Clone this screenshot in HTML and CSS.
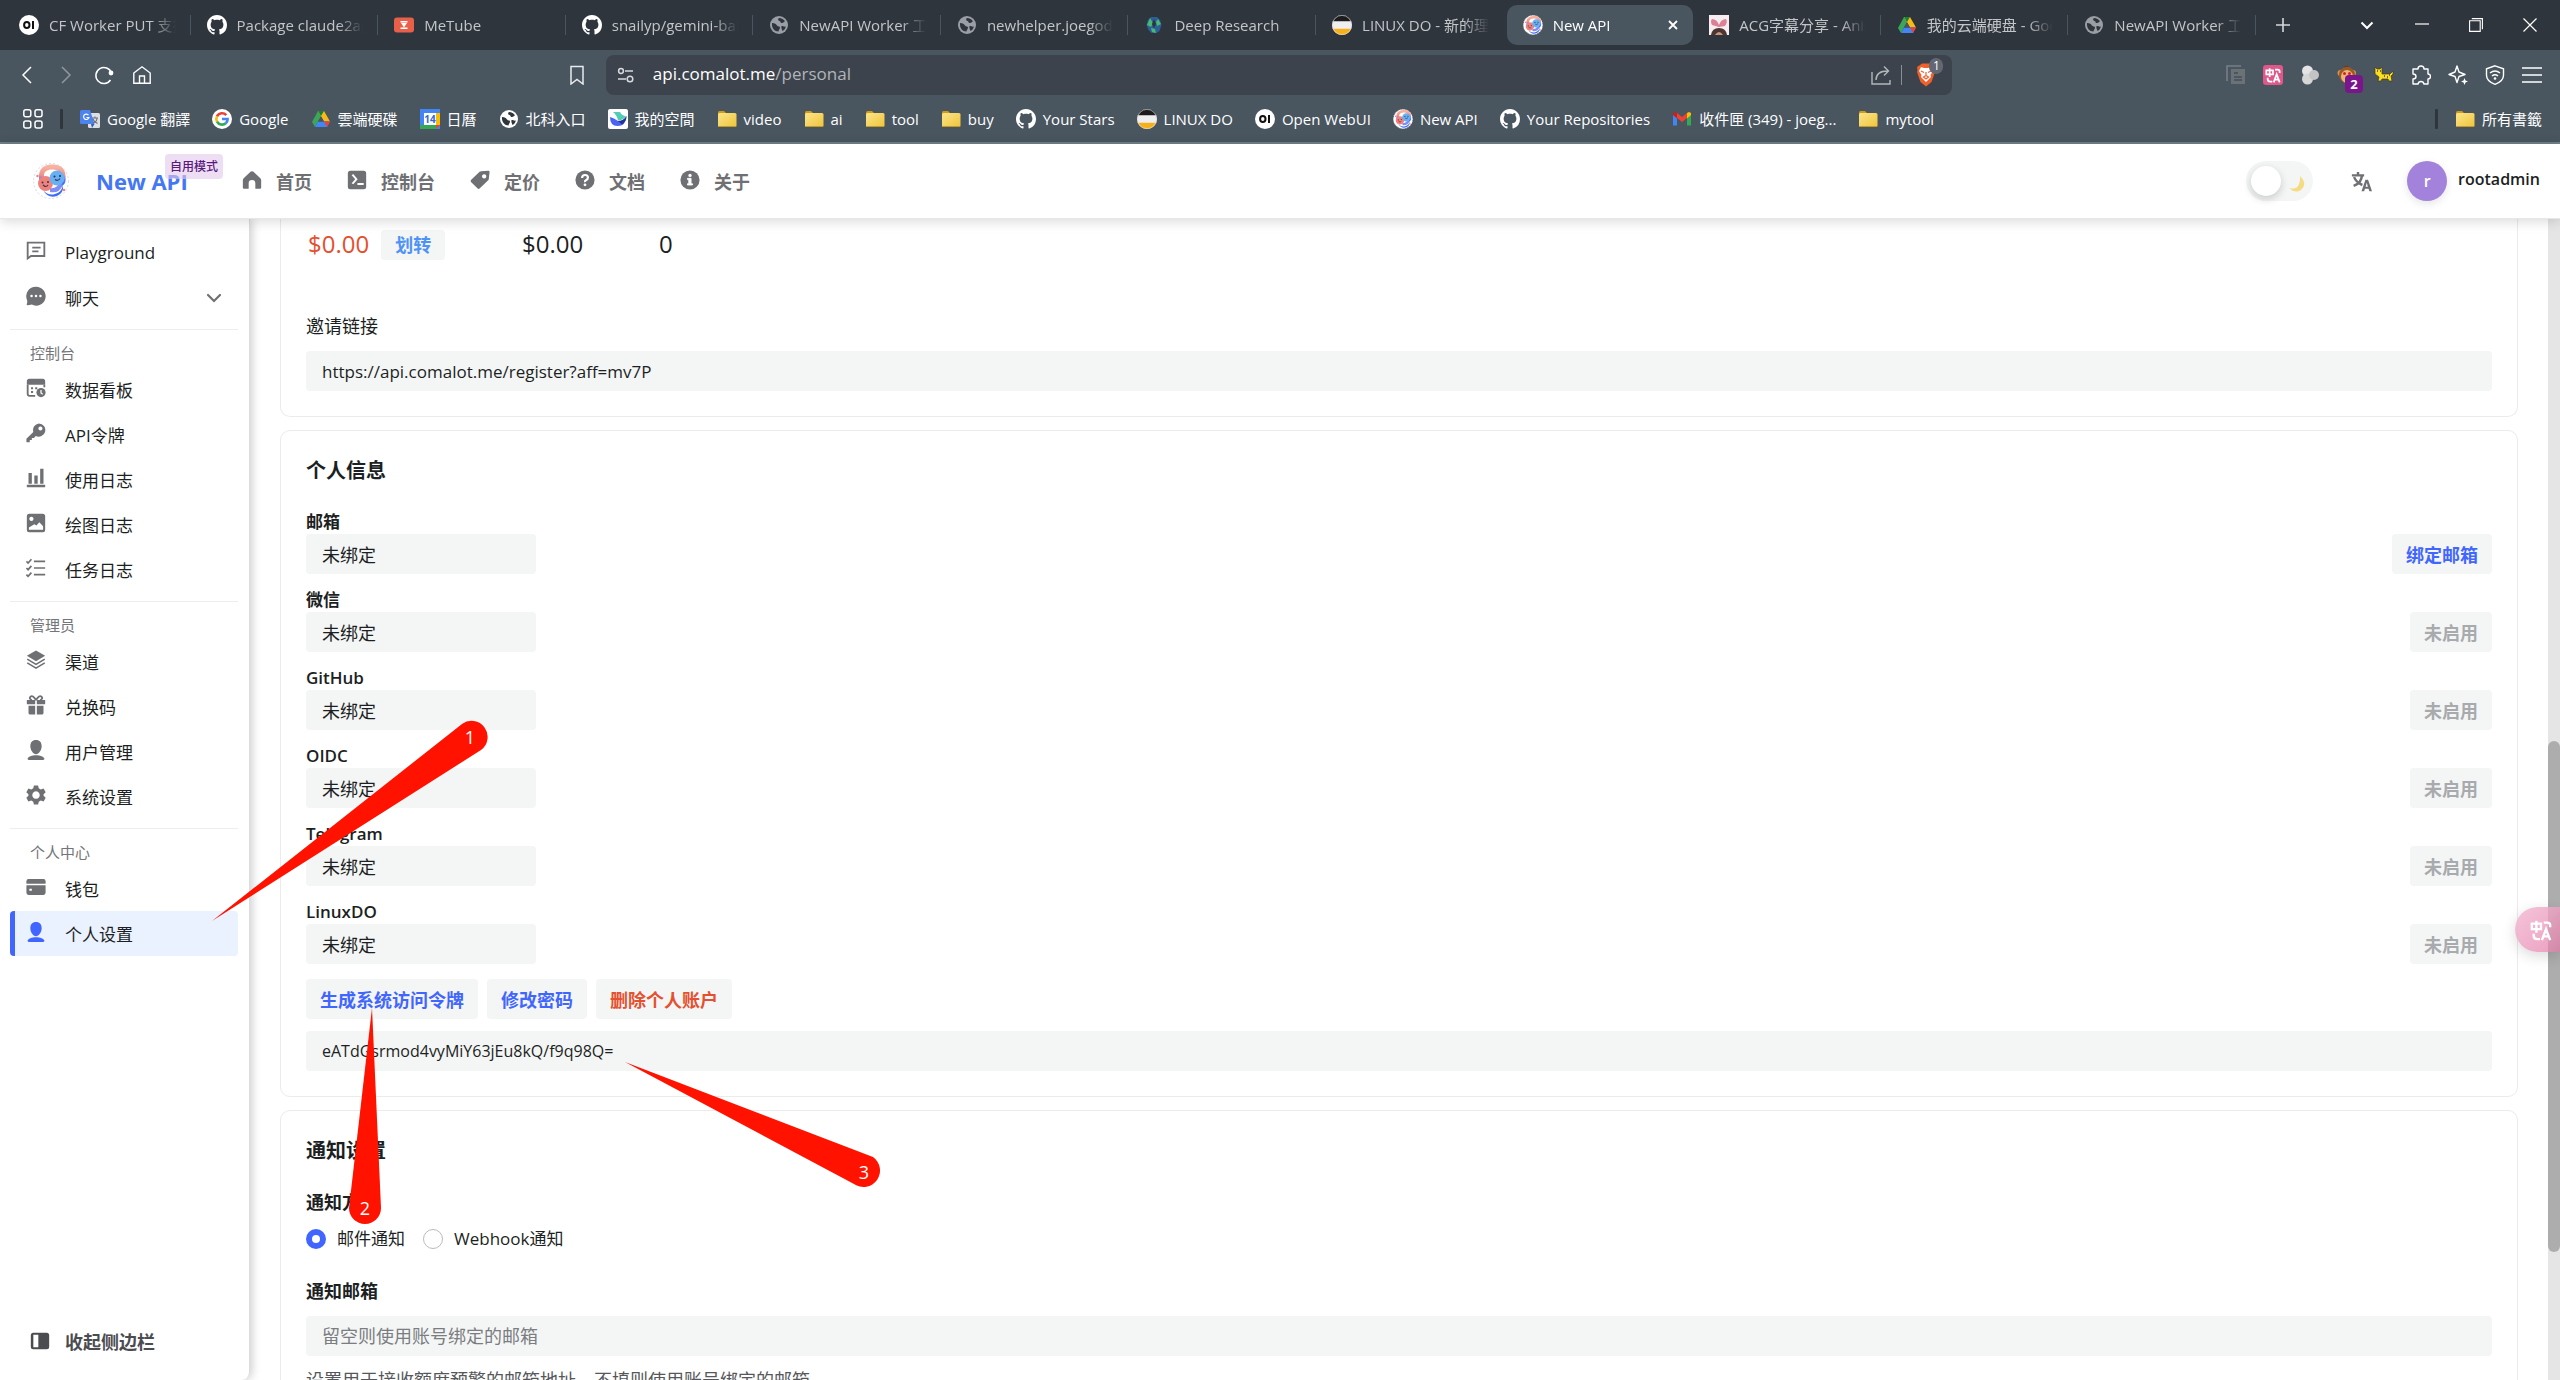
FILE: index.html
```html
<!DOCTYPE html>
<html lang="zh-CN">
<head>
<meta charset="utf-8">
<title>New API</title>
<link rel="stylesheet" href="styles.css">
</head>
<body>
<svg class="sprite" aria-hidden="true">
  <defs>
    <linearGradient id="ring" x1="0" y1="0" x2="0" y2="1"><stop offset="0" stop-color="#f7b3a0"/><stop offset=".5" stop-color="#ee8f8c"/><stop offset=".7" stop-color="#6a7df0"/><stop offset="1" stop-color="#3d6df5"/></linearGradient>
    <linearGradient id="fold" x1="0" y1="0" x2="1" y2="1"><stop offset="0" stop-color="#fbe58a"/><stop offset="1" stop-color="#efc43a"/></linearGradient>
  </defs>
  <symbol id="github" viewBox="0 0 16 16"><path fill="#fff" d="M8 0C3.58 0 0 3.58 0 8c0 3.54 2.29 6.53 5.47 7.59.4.07.55-.17.55-.38 0-.19-.01-.82-.01-1.49-2.01.37-2.53-.49-2.69-.94-.09-.23-.48-.94-.82-1.13-.28-.15-.68-.52-.01-.53.63-.01 1.08.58 1.23.82.72 1.21 1.87.87 2.33.66.07-.52.28-.87.51-1.07-1.78-.2-3.64-.89-3.64-3.95 0-.87.31-1.59.82-2.15-.08-.2-.36-1.02.08-2.12 0 0 .67-.21 2.2.82.64-.18 1.32-.27 2-.27s1.36.09 2 .27c1.53-1.04 2.2-.82 2.2-.82.44 1.1.16 1.92.08 2.12.51.56.82 1.27.82 2.15 0 3.07-1.87 3.75-3.65 3.95.29.25.54.73.54 1.48 0 1.07-.01 1.93-.01 2.2 0 .21.15.46.55.38A8.01 8.01 0 0 0 16 8c0-4.42-3.58-8-8-8z"/></symbol>
  <symbol id="openwebui" viewBox="0 0 20 20"><circle cx="10" cy="10" r="10" fill="#fff"/><ellipse cx="7.8" cy="10" rx="2.7" ry="3" fill="none" stroke="#111" stroke-width="2"/><path d="M14 6v8" stroke="#111" stroke-width="2"/></symbol>
  <symbol id="metube" viewBox="0 0 20 20"><rect y="2.5" width="20" height="15" rx="3" fill="#e9604a"/><path d="M6.500 6h7v1.600H6.500zM6.500 12.500h7V14H6.500zM7 8h6l-3 4.500z" fill="#fff"/></symbol>
  <symbol id="globe" viewBox="0 0 20 20"><circle cx="10" cy="10" r="9" fill="currentColor"/><path class="globe-land" d="M3 8c3 0 4 1 5 2.500s3 .5 3 2-1 1.500-1.500 4c-4 0-7-3.500-6.500-8.500zM10 3c-1.500 1-1 2.500.5 3s.5 2 2.500 2 1.500-1.500 3-1.500C15 4.500 12.500 3 10 3zM12.500 11c2 0 2.500 1 4.300.500-.4 2-1.500 3.500-3.300 4.500-.5-2-1.500-2.500-1-5z"/></symbol>
  <symbol id="deep" viewBox="0 0 20 20"><path d="M7 2h6l3 3 1.500 5-2 6-3 2H7.500l-3-3-2-5L4 5z" fill="#2d5e96"/><path d="M6 3l3 5-2 4-4-2zM14 4l3 5-4 2-1-4zM7 13l4 1 1 4-4-1z" fill="#48b877"/><path d="M10 4l2 5-2 4-2-4z" fill="#2f353d"/></symbol>
  <symbol id="linux" viewBox="0 0 20 20"><circle cx="10" cy="10" r="10" fill="#efefef"/><path d="M.8 6.200a10 10 0 0 1 18.400 0z" fill="#1c1c1e"/><path d="M.8 13.800a10 10 0 0 0 18.400 0z" fill="#f5b01c"/><circle cx="10" cy="10" r="9.600" fill="none" stroke="#ddd" stroke-width=".6"/></symbol>
  <symbol id="newapi" viewBox="0 0 36 36">
    <circle cx="18" cy="18" r="17.500" fill="#fff" stroke="#d5dae2" stroke-dasharray="2 2"/>
    <path d="M9 18Q6 5 18 4t12 10q1 6-3 7" fill="none" stroke="url(#ring)" stroke-width="5"/>
    <path d="M10 27q5 6 12 4t8-9q1 8-6 11-9 3-14-6z" fill="#3d6df5"/>
    <path d="M17 25q7 1 9-5l4 2q-4 9-13 7z" fill="#7f8df5"/>
    <circle cx="12.500" cy="20.500" r="7.500" fill="#f0827c"/><circle cx="24" cy="15" r="7.500" fill="#68b0f4"/>
    <path d="M10 22q3 3 5 0M22 16.500q3 2 5-1" stroke="#3b3550" fill="none" stroke-width="1.200"/>
    <circle cx="9.500" cy="19.500" r="1" fill="#3b3550"/><circle cx="15" cy="19" r="1" fill="#3b3550"/><circle cx="21.500" cy="13.500" r="1" fill="#23304f"/><circle cx="27" cy="13" r="1" fill="#23304f"/>
    <circle cx="4.500" cy="13" r="1.200" fill="#f47d84"/><circle cx="31" cy="27" r="1.200" fill="#f47d84"/>
  </symbol>
  <symbol id="acg" viewBox="0 0 20 20"><path fill="#f6eef0" d="M0 0h20v20H0z"/><path d="M10 12L3 10Q1 6 3 4q5 0 7 6 2-6 7-6 2 3-1 7z" fill="#dc8195"/><path d="M2 20q1-7 8-7t8 7z" fill="#4d3532"/><path d="M6 20q4-6 8 0z" fill="#c9967c"/></symbol>
  <symbol id="drive" viewBox="0 0 20 20"><path d="M7 2h6L7 12.500 4 18 1 13z" fill="#3ba55a"/><path d="M7 2h6l6 10.500h-6z" fill="#f8bb15"/><path d="M7 2h6l-3 5z" fill="#188038"/><path d="M7 12.500h12L16 18H4z" fill="#4285f4"/><path d="M13 12.500h6L16 18z" fill="#ea4335"/><path d="M10 7.500l3 5H7z" fill="#49555f"/></symbol>
  <symbol id="gtrans" viewBox="0 0 20 20"><rect x="8" y="4" width="12" height="15" rx="1.500" fill="#dde0e3"/><path d="M1.500 1H10l4.500 14H1.500A1.500 1.500 0 0 1 0 13.500v-11A1.500 1.500 0 0 1 1.500 1z" fill="#4c83ee"/><path d="M11 15h3.500L12 19z" fill="#2c5cc5"/><path d="M8.500 6.200a2.700 2.700 0 1 0 .4 2.300H6.500" fill="none" stroke="#fff" stroke-width="1.200"/><path d="M12 9h6M15 7.500V9M13 14q4-1 4-5M13 10q1 3 4.500 4.500" fill="none" stroke="#68727c" stroke-width="1.100"/></symbol>
  <symbol id="google" viewBox="0 0 20 20"><circle cx="10" cy="10" r="10" fill="#fff"/><g fill="none" stroke-width="2.600"><path d="M14.300 6.200A5.700 5.700 0 0 0 5 7.300" stroke="#ea4335"/><path d="M5 7.300a5.700 5.700 0 0 0 0 5.400" stroke="#fbbc05"/><path d="M5 12.700a5.700 5.700 0 0 0 8.800 1.500" stroke="#34a853"/><path d="M13.800 14.200A5.500 5.500 0 0 0 15.600 10H10" stroke="#4285f4"/></g></symbol>
  <symbol id="calendar" viewBox="0 0 20 20"><path d="M0 0h20v20H0z" fill="#4285f4"/><path d="M16 4h4v12h-4z" fill="#fbbc04"/><path d="M0 16h16v4H0z" fill="#34a853"/><path d="M16 16h4l-4 4z" fill="#ea4335"/><path d="M4 4h12v12H4z" fill="#fff"/><text x="10" y="13.500" text-anchor="middle" font-size="10" font-weight="700" fill="#3367d6">14</text></symbol>
  <symbol id="space" viewBox="0 0 20 20"><rect width="20" height="20" rx="2" fill="#fff"/><path d="M2 8q4 1 8 4 6 0 8.500-5-.5 10-9 10Q2 17 2 8z" fill="#4a63f2"/><path d="M5 3h7q2 4 6 4-2 4-8 4.500Q9 6 5 3z" fill="#55cdb4"/><path d="M18.500 7q-2.500 5-8.500 5l4 3.500q4.500-3 4.500-8.500z" fill="#25338f"/></symbol>
  <symbol id="folder" viewBox="0 0 20 20"><path d="M1 3.500Q1 2 2.500 2H7l2 2h9v5H1z" fill="#d29b16"/><rect x="1" y="4" width="18.500" height="14" rx="1.500" fill="url(#fold)"/><path d="M1.500 17.500h17.500" stroke="#c79a22" stroke-width="1"/></symbol>
  <symbol id="gmail" viewBox="0 0 20 20"><path d="M1 5v11.500h4V8z" fill="#4285f4"/><path d="M15 8v8.500h4V5z" fill="#34a853"/><path d="M1 6V4l2-1 2 1v5.500z" fill="#c5221f"/><path d="M15 9.500V4l2-1 2 1v2z" fill="#fbbc04"/><path d="M5 4l5 4 5-4v5l-5 4-5-4z" fill="#ea4335"/></symbol>

  <symbol id="i-home" viewBox="0 0 24 24"><path d="M12 1.500q1 0 1.800.700l8.200 7.600q1 1 1 2.300V21q0 1.500-1.500 1.500H16V16q0-4-4-4t-4 4v6.500H2.500Q1 22.500 1 21v-8.900q0-1.300 1-2.300l8.200-7.600Q11 1.500 12 1.500z"/></symbol>
  <symbol id="i-terminal" viewBox="0 0 24 24"><path fill-rule="evenodd" d="M4 1h16q3 0 3 3v16q0 3-3 3H4q-3 0-3-3V4q0-3 3-3zm1.600 5.200L9.800 11l-4.200 4.800 1.900 1.400L12.800 11 7.500 4.800zM12.500 15.500V18H20v-2.500z"/></symbol>
  <symbol id="i-tag" viewBox="0 0 24 24"><path fill-rule="evenodd" d="M13.500 1.500L22 1q1.500 0 1.500 1.500l-1 8.500q-.2 1-1 1.700l-10 9.600q-1.200 1-2.300 0l-8-8q-1-1.300 0-2.400l10.300-9.700q.9-.700 2-.7zM17 5a2.600 2.600 0 1 0 .01 0z"/></symbol>
  <symbol id="i-help" viewBox="0 0 24 24"><circle cx="12" cy="12" r="11.500"/><path d="M8.500 9.500Q8.500 6 12 6t3.500 3q0 2-2 3T12 14.500" fill="none" stroke="#fff" stroke-width="2.600"/><circle cx="12" cy="17.800" r="1.700" fill="#fff"/></symbol>
  <symbol id="i-info" viewBox="0 0 24 24"><circle cx="12" cy="12" r="11.500"/><circle cx="12" cy="6.500" r="2" fill="#fff"/><path d="M9 10h4.300v6.500H15V18H9v-1.500h1.500v-5H9z" fill="#fff" stroke="#fff"/></symbol>
  <symbol id="i-lang" viewBox="0 0 24 24"><path d="M1 5h14M8 1v4M3 17q9-3 9.500-12M3.500 7Q6 13 13 16" fill="none" stroke="currentColor" stroke-width="2.800"/><path fill-rule="evenodd" d="M16.500 10h3L24 23h-3l-1-2.700h-4L15 23h-3zM18 13.500l-1.300 4.500h2.600z"/></symbol>
  <symbol id="i-note" viewBox="0 0 24 24"><path d="M2 2h20v16H6l-4 3zM7.500 8h10M7.500 12.500H15" fill="none" stroke="currentColor" stroke-width="2.200"/></symbol>
  <symbol id="i-chat" viewBox="0 0 24 24"><path d="M12 1a11.300 11.300 0 1 1-5 21.300Q4 23 1.500 23q-1-.3-.5-1.500.8-2 .3-4.500A11.300 11.300 0 0 1 12 1z"/><g fill="#fff"><circle cx="6.700" cy="12" r="1.500"/><circle cx="12" cy="12" r="1.500"/><circle cx="17.300" cy="12" r="1.500"/></g></symbol>
  <symbol id="i-board" viewBox="0 0 24 24"><path d="M2 8v11q0 2.500 2.500 2.500H11M22 8v3" fill="none" stroke="currentColor" stroke-width="2.200"/><path d="M4 1h16q3 0 3 3v4H1V4q0-3 3-3zM6 11h2.500v2.500H6zM11 11h2.500v2.500H11zM6 15.500h2.500V18H6z"/><circle cx="18" cy="17.500" r="5.500"/><path d="M18 14.500V18l2 1.500" fill="none" stroke="#fff" stroke-width="1.500"/></symbol>
  <symbol id="i-key" viewBox="0 0 24 24"><path fill-rule="evenodd" d="M15.500.5a8 8 0 1 1-3.800 15.200L9.500 18H7v2.500H4.500L4.500 23H1q-.5 0-.5-.5V19l8.300-8.300A8 8 0 0 1 15.500.5zM17.300 4.300a2.400 2.400 0 1 0 .01 0z"/></symbol>
  <symbol id="i-bars" viewBox="0 0 24 24"><path d="M1 20h22v3H1zM3 6h4v13H3zM10 9h4v10h-4zM17 1h4v18h-4z"/></symbol>
  <symbol id="i-image" viewBox="0 0 24 24"><path fill-rule="evenodd" d="M4 1h16q3 0 3 3v16q0 3-3 3H4q-3 0-3-3V4q0-3 3-3zm2.500 3.500a2.500 2.500 0 1 0 .01 0zM3.500 20h17v-4l-4.500-5-3.500 4-2.500-1.500-6.500 4z"/></symbol>
  <symbol id="i-check" viewBox="0 0 24 24"><path d="M.5 4l2 2L6.500 1.500M.5 12l2 2 4-4.500M.5 20l2 2 4-4.500M9.500 4H23M9.500 12H23M9.500 20H23" fill="none" stroke="currentColor" stroke-width="2"/></symbol>
  <symbol id="i-layers" viewBox="0 0 24 24"><path d="M12 .5L23 7l-11 6.500L1 7z"/><path d="M1.500 11L12 17.300 22.500 11M1.500 15.500L12 21.800l10.500-6.300" fill="none" stroke="currentColor" stroke-width="1.900"/></symbol>
  <symbol id="i-gift" viewBox="0 0 24 24"><path d="M1 6h10v5H1zM13 6h10v5H13zM3 13h8v10.500H5q-2 0-2-2zM13 13h8v8.500q0 2-2 2h-6z"/><path d="M12 6Q8-.5 5.500 2T7 6M12 6q4-6.500 6.500-4T17 6" fill="none" stroke="currentColor" stroke-width="2.200"/></symbol>
  <symbol id="i-user" viewBox="0 0 24 24"><path d="M12 0c4.500 0 6.800 3 6.800 7.500S15.500 17 12 17 5.200 12 5.200 7.500 7.500 0 12 0zM12 18.300c5 0 9 1.700 10 3.700.3 1.200-.5 2-1.500 2h-17c-1 0-1.800-.8-1.500-2 1-2 5-3.700 10-3.700z"/></symbol>
  <symbol id="i-gear" viewBox="0 0 24 24"><path fill-rule="evenodd" d="M9.500.5h5l.8 3.400 2.400 1.400 3.400-1 2.500 4.400L21.100 11v2l2.500 2.300-2.500 4.400-3.400-1-2.400 1.400-.8 3.400h-5l-.8-3.400-2.400-1.400-3.400 1-2.500-4.400L2.900 13v-2L.4 8.700l2.500-4.400 3.400 1 2.400-1.400zM12 7.500a4.500 4.500 0 1 0 .01 0z"/></symbol>
  <symbol id="i-card" viewBox="0 0 24 24"><path d="M3 2.500h18q2.500 0 2.500 2.500v3H.5V5Q.5 2.500 3 2.500z"/><path fill-rule="evenodd" d="M.5 10h23v9q0 2.500-2.500 2.500H3Q.5 21.500.5 19zM4 14v2.500h3V14z"/></symbol>
  <symbol id="i-side" viewBox="0 0 24 24"><path fill-rule="evenodd" d="M4 2h16q3 0 3 3v14q0 3-3 3H4q-3 0-3-3V5q0-3 3-3zm0 2.500v15h6v-15z"/></symbol>
  <symbol id="i-down" viewBox="0 0 16 16"><path d="M2 5l6 6 6-6" fill="none" stroke="currentColor" stroke-width="2.200" stroke-linecap="round"/></symbol>
  <symbol id="i-translate" viewBox="0 0 24 24"><path d="M2 5h10v6H2zM7 2v13M15 4h4q3 0 3 3v2M4 16v2q0 4 4 4h3M13 23l4.500-12L22 23M14.500 19h6" fill="none" stroke="#fff" stroke-width="2.600"/></symbol>
</svg>

<header class="browser">
  <div class="tabstrip">
    <nav class="tabs">
      <button class="tab"><svg><use href="#openwebui"/></svg><span>CF Worker PUT 支持</span></button>
      <button class="tab"><svg><use href="#github"/></svg><span>Package claude2api</span></button>
      <button class="tab"><svg><use href="#metube"/></svg><span>MeTube</span></button>
      <button class="tab"><svg><use href="#github"/></svg><span>snailyp/gemini-balance</span></button>
      <button class="tab"><svg class="dim"><use href="#globe"/></svg><span>NewAPI Worker 工具</span></button>
      <button class="tab"><svg class="dim"><use href="#globe"/></svg><span>newhelper.joegodwin</span></button>
      <button class="tab"><svg><use href="#deep"/></svg><span>Deep Research</span></button>
      <button class="tab bare"><svg><use href="#linux"/></svg><span>LINUX DO - 新的理想</span></button>
      <button class="tab current"><svg><use href="#newapi"/></svg><span>New API</span><svg class="close" viewBox="0 0 12 12"><path d="M2 2l8 8M10 2l-8 8" stroke="#fff" stroke-width="1.800"/></svg></button>
      <button class="tab"><svg><use href="#acg"/></svg><span>ACG字幕分享 - Anime</span></button>
      <button class="tab"><svg><use href="#drive"/></svg><span>我的云端硬盘 - Google</span></button>
      <button class="tab"><svg class="dim"><use href="#globe"/></svg><span>NewAPI Worker 工具</span></button>
    </nav>
    <div class="window-tools">
      <button class="add" aria-label="New tab"><svg viewBox="0 0 14 14"><path d="M7 0v14M0 7h14" stroke="#d5d8da" stroke-width="1.600"/></svg></button>
      <button aria-label="Tabs"><svg viewBox="0 0 14 14"><path d="M1.500 4.500L7 10l5.500-5.500" fill="none" stroke="#fff" stroke-width="2"/></svg></button>
      <button aria-label="Minimize"><svg viewBox="0 0 14 14"><path d="M0 6h14" stroke="#fff" stroke-width="1.200"/></svg></button>
      <button aria-label="Restore"><svg viewBox="0 0 14 14"><path d="M.6 2.800h10.600v10.600H.6zM2.800.6h10.600v10.600" fill="none" stroke="#fff" stroke-width="1.100"/></svg></button>
      <button aria-label="Close"><svg viewBox="0 0 14 14"><path d="M.5.5l13 13M13.500.5l-13 13" stroke="#fff" stroke-width="1.200"/></svg></button>
    </div>
  </div>

  <div class="toolbar">
    <div class="nav-buttons">
      <button aria-label="Back"><svg viewBox="0 0 20 20"><path d="M13 2L5 10l8 8" fill="none" stroke="#fff" stroke-width="1.500"/></svg></button>
      <button aria-label="Forward"><svg viewBox="0 0 20 20"><path d="M6 2l8 8-8 8" fill="none" stroke="#8f989e" stroke-width="1.500"/></svg></button>
      <button aria-label="Reload"><svg viewBox="0 0 20 20"><path d="M16.500 15A8 8 0 1 1 17.500 8" fill="none" stroke="#fff" stroke-width="1.500"/><circle cx="17" cy="8" r="2.400" fill="#fff"/></svg></button>
      <button aria-label="Home"><svg viewBox="0 0 20 20"><path d="M1.800 8L10 1.800 18.200 8v10.200H1.800zM7.500 18v-7h5v7" fill="none" stroke="#fff" stroke-width="1.400"/></svg></button>
    </div>
    <button class="mark" aria-label="Bookmark"><svg viewBox="0 0 20 20"><path d="M4 1.500h12V19l-6-4.500L4 19z" fill="none" stroke="#e8eaeb" stroke-width="1.500"/></svg></button>
    <div class="omnibox">
      <svg viewBox="0 0 20 20"><g fill="none" stroke="#d8dadd" stroke-width="1.500"><circle cx="5" cy="6" r="2.400"/><circle cx="14" cy="14" r="2.800"/><path d="M9 6h8M2 14h8"/></g></svg>
      <div class="url" role="textbox" aria-label="Address">api.comalot.me<span>/personal</span></div>
      <svg viewBox="0 0 20 20"><path d="M1 7v12h18v-4M5 15q0-9 12-9M13 1.500L17.500 6 13 10.500" fill="none" stroke="#b4b8bc" stroke-width="1.400"/></svg>
      <i></i>
      <button class="brave" aria-label="Shields"><svg viewBox="0 0 20 24"><path d="M4 2l2-1.500h8L16 2l3 2-.5 3 .5 2-3.500 10L10 23.500 4.500 19 1 9l.5-2L1 4z" fill="#f0602a"/><path d="M5 4l3 1h4l3-1 2 4-2.500 4 .5 2-5 5-5-5 .5-2L3 8z" fill="#fff"/><path d="M5 8l3 1.500M15 8l-3 1.500M10 9v4M7.500 14l2.500-1.500 2.500 1.500-2.500 2z" stroke="#f0602a" fill="none" stroke-width="1.200"/></svg><b>1</b></button>
    </div>
    <div class="extensions">
      <svg viewBox="0 0 20 20"><path d="M1 16V1h14" fill="none" stroke="#777f86" stroke-width="1.600"/><path d="M5 4h14v15H5z" fill="#6a7177"/><path d="M8 8h4M8 12h8M8 15h8" stroke="#444f58" stroke-width="1.600"/></svg>
      <svg viewBox="0 0 20 20"><rect width="20" height="20" rx="3" fill="#e0578a"/><use href="#i-translate" x="2" y="2" width="16" height="16"/></svg>
      <svg viewBox="0 0 20 20"><circle cx="7.500" cy="6" r="5.500" fill="#e4e4e4"/><circle cx="7.500" cy="14" r="5.500" fill="#d6d6d6"/><circle cx="14" cy="10" r="5" fill="#c4c4c4"/></svg>
      <span class="monkey"><svg viewBox="0 0 20 20"><path d="M7 3l1-3 1 2 2-2v3" fill="#6b3d17"/><circle cx="3.500" cy="8" r="3" fill="#d88f4e"/><circle cx="16" cy="8" r="3" fill="#d88f4e"/><circle cx="10" cy="10" r="8" fill="#9a5a26"/><ellipse cx="10" cy="11.500" rx="6" ry="6.500" fill="#eeb478"/><circle cx="7.500" cy="8.500" r="1.500" fill="#d5222a"/><circle cx="12.500" cy="8.500" r="1.500" fill="#d5222a"/></svg><b>2</b></span>
      <svg viewBox="0 0 20 20"><path d="M1 2l2 2h3l2-2v7h8l3-3v3l-2 2 1 5h-3l-1-2H8l-1 2H4l1-4-4-3z" fill="#f8e020" stroke="#4c3b10" stroke-width=".7"/><path d="M3 6h1M6 6h1M10 11h1M13 12h1M15 10h1" stroke="#4c3b10" stroke-width="1.300"/></svg>
      <svg viewBox="0 0 20 20"><path d="M2 4h5q0-3 3-3t3 3h4v5q2.500 0 2.500 2.500T17 14v5h-4q-.5-2.500-3-2.500T7 19H2v-5q3 0 3-2.500T2 9z" fill="none" stroke="#fff" stroke-width="1.400" stroke-linejoin="round"/></svg>
      <svg viewBox="0 0 20 20"><path d="M9 1l2 6 6 2.500-6 2-2 6-2-6-6-2L7 7z" fill="none" stroke="#fff" stroke-width="1.400" stroke-linejoin="round"/><path d="M16.500 13l1 2.500 2.500 1-2.500 1-1 2.500-1-2.500-2.500-1 2.500-1z" fill="#fff"/></svg>
      <svg viewBox="0 0 20 20"><path d="M10 .8l8.500 3v6.500q0 6-8.500 9-8.500-3-8.500-9V3.800z" fill="none" stroke="#fff" stroke-width="1.400"/><path d="M5 8q5-4 10 0M7 11q3-2.500 6 0" fill="none" stroke="#fff" stroke-width="1.500"/><circle cx="10" cy="13.500" r="1.300" fill="#fff"/></svg>
      <svg viewBox="0 0 20 20"><path d="M0 3h20M0 10h20M0 17h20" stroke="#fff" stroke-width="1.500"/></svg>
    </div>
  </div>

  <nav class="bookmarks">
    <svg viewBox="0 0 20 20" class="apps"><g fill="none" stroke="#fff" stroke-width="1.500"><rect x=".8" y=".8" width="7" height="7" rx="2"/><rect x="12" y=".8" width="7" height="7" rx="2"/><rect x=".8" y="12" width="7" height="7" rx="2"/><rect x="12" y="12" width="7" height="7" rx="2"/></g></svg>
    <i></i>
    <a href="#"><svg><use href="#gtrans"/></svg>Google 翻譯</a>
    <a href="#"><svg><use href="#google"/></svg>Google</a>
    <a href="#"><svg><use href="#drive"/></svg>雲端硬碟</a>
    <a href="#"><svg><use href="#calendar"/></svg>日曆</a>
    <a href="#"><svg><use href="#globe"/></svg>北科入口</a>
    <a href="#"><svg><use href="#space"/></svg>我的空間</a>
    <a href="#"><svg><use href="#folder"/></svg>video</a>
    <a href="#"><svg><use href="#folder"/></svg>ai</a>
    <a href="#"><svg><use href="#folder"/></svg>tool</a>
    <a href="#"><svg><use href="#folder"/></svg>buy</a>
    <a href="#"><svg><use href="#github"/></svg>Your Stars</a>
    <a href="#"><svg><use href="#linux"/></svg>LINUX DO</a>
    <a href="#"><svg><use href="#openwebui"/></svg>Open WebUI</a>
    <a href="#"><svg><use href="#newapi"/></svg>New API</a>
    <a href="#"><svg><use href="#github"/></svg>Your Repositories</a>
    <a href="#"><svg><use href="#gmail"/></svg>收件匣 (349) - joeg...</a>
    <a href="#"><svg><use href="#folder"/></svg>mytool</a>
    <i class="push"></i>
    <a href="#"><svg><use href="#folder"/></svg>所有書籤</a>
  </nav>
</header>

<div class="topbar">
  <svg class="logo"><use href="#newapi"/></svg>
  <div class="brand"><strong>New API</strong><span>自用模式</span></div>
  <nav class="menu">
    <a href="#"><svg><use href="#i-home"/></svg>首页</a>
    <a href="#"><svg><use href="#i-terminal"/></svg>控制台</a>
    <a href="#"><svg><use href="#i-tag"/></svg>定价</a>
    <a href="#"><svg><use href="#i-help"/></svg>文档</a>
    <a href="#"><svg><use href="#i-info"/></svg>关于</a>
  </nav>
  <label class="switch"><input type="checkbox" role="switch" aria-label="深色模式"><svg viewBox="0 0 18 18"><path d="M12 1q8 8 1 14-6 4-12-2 8 2 10-4 1.500-4 1-8z" fill="#f5dc82"/></svg></label>
  <button class="lang" aria-label="语言"><svg><use href="#i-lang"/></svg></button>
  <button class="user"><span>r</span><em>rootadmin</em></button>
</div>

<div class="body">
  <aside class="sidebar">
    <a href="#"><svg><use href="#i-note"/></svg>Playground</a>
    <a href="#"><svg><use href="#i-chat"/></svg>聊天<svg class="more"><use href="#i-down"/></svg></a>
    <hr>
    <h6>控制台</h6>
    <a href="#"><svg><use href="#i-board"/></svg>数据看板</a>
    <a href="#"><svg><use href="#i-key"/></svg>API令牌</a>
    <a href="#"><svg><use href="#i-bars"/></svg>使用日志</a>
    <a href="#"><svg><use href="#i-image"/></svg>绘图日志</a>
    <a href="#"><svg><use href="#i-check"/></svg>任务日志</a>
    <hr>
    <h6>管理员</h6>
    <a href="#"><svg><use href="#i-layers"/></svg>渠道</a>
    <a href="#"><svg><use href="#i-gift"/></svg>兑换码</a>
    <a href="#"><svg><use href="#i-user"/></svg>用户管理</a>
    <a href="#"><svg><use href="#i-gear"/></svg>系统设置</a>
    <hr>
    <h6>个人中心</h6>
    <a href="#"><svg><use href="#i-card"/></svg>钱包</a>
    <a href="#" class="active"><svg><use href="#i-user"/></svg>个人设置</a>
    <button class="collapse"><svg><use href="#i-side"/></svg>收起侧边栏</button>
  </aside>

  <main>
    <section class="card invite">
      <div class="stats">
        <div class="due">$0.00<button class="small">划转</button></div>
        <div>$0.00</div>
        <div>0</div>
      </div>
      <label for="aff">邀请链接</label>
      <input id="aff" class="wide" readonly value="https://api.comalot.me/register?aff=mv7P">
    </section>

    <section class="card">
      <h2>个人信息</h2>
      <div class="fields">
        <div class="field"><label for="f1">邮箱</label><input id="f1" readonly value="未绑定"><button class="link">绑定邮箱</button></div>
        <div class="field"><label for="f2">微信</label><input id="f2" readonly value="未绑定"><button disabled>未启用</button></div>
        <div class="field"><label for="f3">GitHub</label><input id="f3" readonly value="未绑定"><button disabled>未启用</button></div>
        <div class="field"><label for="f4">OIDC</label><input id="f4" readonly value="未绑定"><button disabled>未启用</button></div>
        <div class="field"><label for="f5">Telegram</label><input id="f5" readonly value="未绑定"><button disabled>未启用</button></div>
        <div class="field"><label for="f6">LinuxDO</label><input id="f6" readonly value="未绑定"><button disabled>未启用</button></div>
      </div>
      <div class="actions">
        <button class="link">生成系统访问令牌</button>
        <button class="link">修改密码</button>
        <button class="danger">删除个人账户</button>
      </div>
      <input class="wide token" aria-label="系统访问令牌" readonly value="eATdGsrmod4vyMiY63jEu8kQ/f9q98Q=">
    </section>

    <section class="card">
      <h2>通知设置</h2>
      <fieldset>
        <legend>通知方式</legend>
        <label><input type="radio" name="notify" checked>邮件通知</label>
        <label><input type="radio" name="notify">Webhook通知</label>
      </fieldset>
      <label class="strong" for="mail">通知邮箱</label>
      <input id="mail" class="wide" placeholder="留空则使用账号绑定的邮箱">
      <p>设置用于接收额度预警的邮箱地址，不填则使用账号绑定的邮箱</p>
    </section>
  </main>
  <div class="scrollbar"><span></span></div>
</div>

<button class="float" aria-label="翻译"><svg><use href="#i-translate"/></svg></button>

<svg class="pins" viewBox="0 0 1000 1380">
  <g fill="#ff1200">
    <path d="M212 921L462 724A16 16 0 1 1 481 750z"/>
    <path d="M372 1008L381 1208A16 16 0 1 1 349 1208z"/>
    <path d="M625 1062L873 1157A16 16 0 1 1 854 1184z"/>
  </g>
  <g class="pin-text"><text x="470" y="744">1</text><text x="365" y="1215">2</text><text x="864" y="1179">3</text></g>
</svg>
</body>
</html>
```
FILE: styles.css
```css
* { box-sizing: border-box; }
body {
  margin: 0;
  height: 100vh;
  overflow: hidden;
  position: relative;
  display: flex;
  flex-direction: column;
  background: #fff;
  color: #1c1f23;
  font-family: "Open Sans", "Noto Sans CJK SC", sans-serif;
  font-size: 18px;
}
a { color: inherit; text-decoration: none; }
button { border: 0; padding: 0; background: none; font: inherit; color: inherit; }
input { font: inherit; color: inherit; }
svg { fill: currentColor; flex: none; }
.sprite { position: absolute; width: 0; height: 0; }

/* browser frame */
.browser { background: #49555f; border-bottom: 2px solid #6f808a; color: #fff; font-size: 15px; flex: none; }
.tabstrip { display: flex; height: 50px; background: #2f353d; }
.tabs { flex: 1; display: flex; padding-left: 3px; min-width: 0; }
.tab {
  flex: 1;
  min-width: 0;
  height: 20px;
  margin-top: 15px;
  display: flex;
  align-items: center;
  gap: 10px;
  padding: 0 14px 0 16px;
  border-right: 1px solid #49555f;
  color: #c3c6c9;
  text-align: left;
}
.tab svg { width: 20px; height: 20px; }
.tab span {
  flex: 1;
  overflow: hidden;
  white-space: nowrap;
  line-height: 26px;
  -webkit-mask-image: linear-gradient(to right, #000 80%, transparent);
  mask-image: linear-gradient(to right, #000 80%, transparent);
}
.tab.bare { border-color: transparent; }
.tab.current { height: 40px; margin: 5px 0 0 3px; background: #49555f; border: 0; border-radius: 10px; color: #fff; }
.tab .close { width: 12px; height: 12px; }
.dim { color: #9a9fa5; }
.globe-land { fill: #2f353d; }
.bookmarks .globe-land { fill: #49555f; }
.window-tools { display: flex; align-items: center; padding-right: 3px; width: 304px; }
.window-tools button { flex: 1; display: flex; justify-content: center; }
.window-tools .add { margin-right: 30px; }
.window-tools svg { width: 14px; height: 14px; }

.toolbar { display: flex; align-items: center; height: 50px; }
.toolbar svg { width: 20px; height: 20px; }
.toolbar button { display: flex; }
.nav-buttons { display: flex; gap: 18px; padding-left: 18px; flex: 566; }
.mark { margin-right: 19px; }
.omnibox { flex: 1362; height: 40px; display: flex; align-items: center; padding: 0 16px 0 10px; background: #3c434c; border-radius: 8px; }
.url { flex: 1; margin-left: 17px; font-size: 17px; line-height: 24px; padding-bottom: 2px; }
.url span { color: #b1b5ba; }
.omnibox i { width: 1px; height: 20px; margin: 0 14px 0 10px; background: #8a8f96; }
.brave { position: relative; }
.brave b { position: absolute; left: 13px; top: -5px; width: 14px; height: 16px; border-radius: 8px; background: #626773; font-size: 12px; font-weight: 400; line-height: 16px; text-align: center; }
.toolbar .brave svg { height: 24px; }
.extensions { flex: 608; display: flex; justify-content: flex-end; gap: 17px; padding-right: 18px; }
.monkey { position: relative; display: flex; }
.monkey b { position: absolute; left: 8px; top: 10px; width: 18px; height: 18px; border-radius: 4px; background: #7a158c; font-size: 13px; line-height: 18px; text-align: center; }

.bookmarks { display: flex; align-items: center; height: 42px; padding: 0 18px 5px 23px; white-space: nowrap; }
.bookmarks a { display: flex; align-items: center; gap: 7px; margin-right: 22px; }
.bookmarks svg { width: 20px; height: 20px; }
.bookmarks i { width: 3px; height: 20px; margin: 0 17px; background: #2f353d; border-radius: 1px; }
.bookmarks .push { margin-left: auto; }
.bookmarks a:last-child { margin-right: 0; }

/* site header */
.topbar {
  flex: none;
  position: relative;
  z-index: 2;
  display: flex;
  align-items: center;
  height: 75px;
  padding: 0 20px 0 33px;
  background: #fff;
  border-bottom: 1px solid #e8e8ea;
  box-shadow: 0 2px 12px rgba(0, 0, 0, .16);
}
.logo { width: 36px; height: 36px; }
.brand { position: relative; margin-left: 27px; width: 146px; }
.brand strong { font-size: 22px; font-weight: 700; color: #4478f2; }
.brand span { position: absolute; left: 69px; top: -12px; padding: 0 5px; height: 25px; border-radius: 4px; background: rgba(226, 200, 236, .6); color: #5a1a7c; font-size: 12px; font-weight: 500; line-height: 25px; white-space: nowrap; }
.menu { flex: 1; display: flex; gap: 35px; color: #6f7074; font-weight: 600; }
.menu a { display: flex; align-items: center; gap: 14px; }
.menu svg { width: 20px; height: 20px; margin-bottom: 3px; }
.switch { position: relative; display: flex; }
.switch input { appearance: none; margin: 0; width: 67px; height: 40px; border-radius: 20px; background: #f4f6f6; }
.switch input::before { content: ""; display: block; width: 30px; height: 30px; margin: 5px; border-radius: 50%; background: #fff; box-shadow: 0 3px 8px rgba(0, 0, 0, .18); }
.switch svg { position: absolute; right: 7px; top: 14px; width: 18px; height: 18px; }
.lang { margin: 0 35px 0 38px; color: #6f7074; }
.lang svg { display: block; width: 21px; height: 21px; }
.user { display: flex; align-items: center; gap: 11px; font-size: 16px; font-weight: 600; }
.user span { width: 40px; height: 40px; border-radius: 50%; background: #a382dc; color: #fff; line-height: 40px; text-align: center; box-shadow: 0 3px 8px rgba(0, 0, 0, .1); }
.user em { font-style: normal; padding-bottom: 4px; }

/* page */
.body { flex: 1; min-height: 0; display: flex; }
.sidebar {
  flex: none;
  width: 250px;
  display: flex;
  flex-direction: column;
  padding: 11px 11px 17px 10px;
  border-right: 1px solid #dcdcdf;
  border-bottom-right-radius: 8px;
  box-shadow: 2px 0 10px rgba(0, 0, 0, .2);
  font-size: 17px;
}
.sidebar a { flex: none; display: flex; align-items: center; gap: 19px; height: 45px; padding: 0 16px 0 11px; border-left: 5px solid transparent; border-radius: 4px; }
.sidebar svg { width: 20px; height: 20px; margin-bottom: 3px; color: #6f7074; }
.sidebar .more { width: 16px; height: 16px; margin: 0 0 0 auto; }
.sidebar hr { width: 100%; margin: 9px 0 0; border: 0; border-top: 1px solid #ededf0; }
.sidebar h6 { margin: 0; padding: 11px 0 1px 20px; font-size: 15px; font-weight: 400; line-height: 25px; color: #74757a; }
.sidebar .active { background: #eaf1ff; border-color: #4166ff; }
.sidebar .active svg { color: #4166ff; }
.sidebar .collapse { display: flex; align-items: center; gap: 15px; height: 45px; margin-top: auto; padding-left: 20px; color: #4b4c50; font-size: 18px; font-weight: 600; }
.sidebar .collapse svg { margin: 0; color: #4b4c50; }

main { flex: 1; min-width: 0; overflow: hidden; display: flex; flex-direction: column; gap: 13px; padding: 0 30px 0 30px; }
.card { flex: none; padding: 25px; border: 1px solid #ebebee; border-radius: 10px; }
.card > input { display: block; }
.card h2 { margin: 0; font-size: 20px; font-weight: 700; line-height: 30px; }
.card input:not([type]) { width: 230px; height: 40px; padding: 0 16px; border: 0; border-radius: 4px; background: #f4f6f6; }
.card input.wide:not([type]) { width: 100%; }
.card input::placeholder { color: #7b7d81; opacity: 1; }
#aff { font-size: 17px; }
.token { font-size: 16px; }
.card button { height: 40px; padding: 0 14px; border-radius: 4px; background: #f4f6f6; font-weight: 600; }
.card button.link { color: #4166ff; }
.card button.danger { color: #e5502f; }
.card button:disabled { color: #a8aaad; }

.invite { border-top: 0; border-radius: 0 0 10px 10px; padding-top: 11px; }
.stats { display: grid; grid-template-columns: 214px 137px 1fr; align-items: center; padding-left: 2px; margin-bottom: 52px; font-size: 24px; font-weight: 500; line-height: 28px; }
.stats > div { padding-bottom: 2px; }
.stats .due { display: flex; gap: 12px; padding: 0; color: #e5502f; }
.card .small { height: 30px; font-size: 18px; color: #4f92f7; }
.invite label { display: block; margin-bottom: 11px; line-height: 28px; }

.fields { display: flex; flex-direction: column; gap: 10px; margin-top: 20px; }
.field { display: grid; grid-template-columns: 1fr auto; }
.field label { grid-column: 1 / 3; padding-top: 4px; font-size: 17px; font-weight: 600; line-height: 24px; }
.actions { display: flex; gap: 9px; margin: 15px 0 12px; }

fieldset { display: flex; gap: 18px; margin: 22px 0 24px; padding: 0; border: 0; }
legend { padding: 0; margin-bottom: 9px; font-weight: 600; line-height: 28px; }
fieldset label { display: flex; align-items: center; gap: 11px; font-size: 17px; line-height: 28px; }
input[type="radio"] { appearance: none; width: 20px; height: 20px; margin: 0; border: 1px solid #b9bbbe; border-radius: 50%; background: #fff; }
input[type="radio"]:checked { border: 6px solid #4166ff; }
.strong { display: block; margin-bottom: 11px; font-weight: 600; line-height: 28px; }
.card p { margin: 10px 0 0; line-height: 28px; color: #55575b; }

.scrollbar { flex: none; width: 12px; display: grid; grid-template-rows: 45fr 44fr 11fr; background: #e5e5e5; }
.scrollbar span { grid-row: 2; border-radius: 6px; background: #adadad; }

.float { position: absolute; z-index: 3; right: 0; top: 907px; width: 45px; height: 45px; display: flex; align-items: center; padding-left: 15px; border-radius: 23px 0 0 23px; background: linear-gradient(135deg, rgba(244, 190, 215, .9), rgba(226, 120, 165, .7)); box-shadow: 0 4px 14px rgba(0, 0, 0, .15); }
.float svg { width: 22px; height: 22px; }
.pins { position: absolute; z-index: 4; left: 0; top: 0; width: 1000px; height: 1380px; pointer-events: none; }
.pin-text { fill: #fff; font-size: 18px; text-anchor: middle; }
```
